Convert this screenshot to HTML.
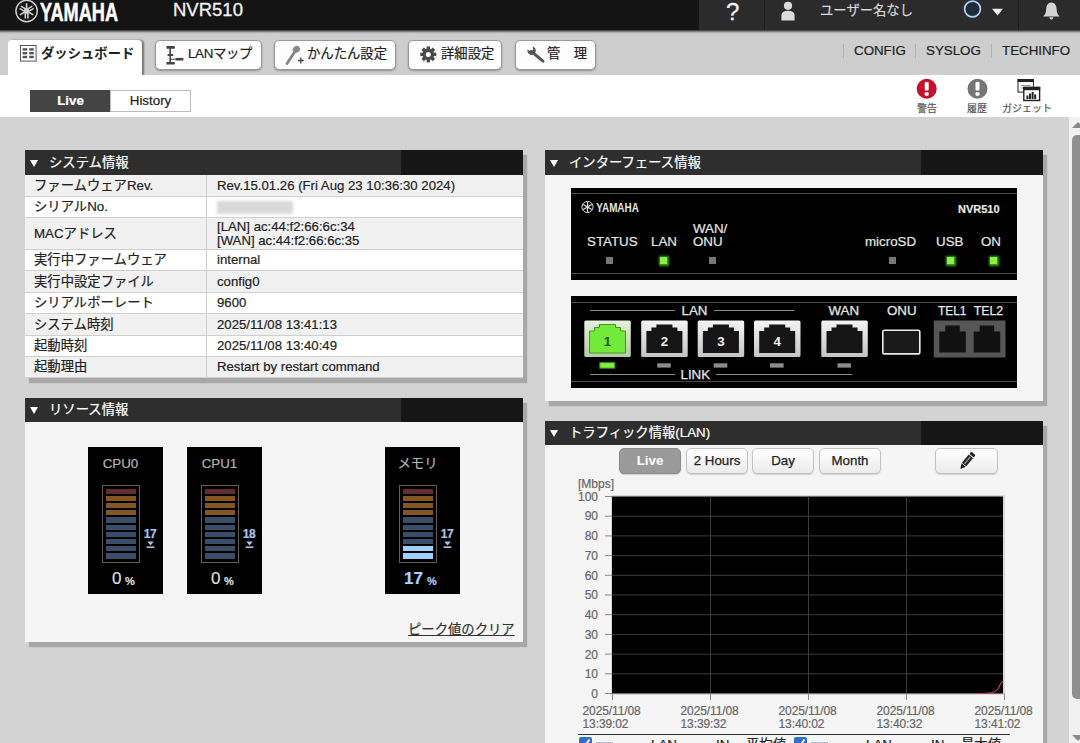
<!DOCTYPE html>
<html lang="ja">
<head>
<meta charset="utf-8">
<title>NVR510</title>
<style>
*{box-sizing:border-box;margin:0;padding:0}
html,body{width:1080px;height:743px;overflow:hidden;background:#d3d3d3;font-family:"Liberation Sans","Noto Sans CJK JP",sans-serif;color:#222;-webkit-text-stroke-width:.2px}
#root{position:absolute;left:0;top:0;width:1080px;height:743px;overflow:hidden}
.abs{position:absolute}
#hdr{position:absolute;left:0;top:0;width:1080px;height:30px;background:#141414}
#hdr .right{position:absolute;left:699px;top:0;width:381px;height:30px;background:#2b2b2b}
#hdr .div{position:absolute;top:0;width:1px;height:30px;background:#1c1c1c}
#nav{position:absolute;left:0;top:30px;width:1080px;height:45px;background:linear-gradient(#2e2e2e 0,#6e6e6e 1.2px,#b4b4b4 2.6px,#cecece 4px,#cecece 100%)}
.tab{position:absolute;left:8px;top:40px;width:134px;height:36px;background:#fff;border-radius:4px 4px 0 0;box-shadow:2px 0 2px rgba(0,0,0,.45)}
.nbtn{position:absolute;top:40px;height:30px;background:#fdfdfd;border:1px solid #989898;border-radius:5px;box-shadow:0 1px 2px rgba(0,0,0,.3)}
.ntext{position:absolute;white-space:nowrap;font-size:13.33px;color:#222;line-height:16px}
#sub{position:absolute;left:0;top:75px;width:1080px;height:42px;background:#fff}
#main{position:absolute;left:0;top:117px;width:1069px;height:626px;background:#d3d3d3}
#sbar{position:absolute;left:1069px;top:117px;width:11px;height:626px;background:#f1f1f1}
.ph{position:absolute;height:23px;background:#2e2e2e}
.ph .dk{position:absolute;right:0;top:0;bottom:0;width:122px;background:#161616}
.ph .t{position:absolute;left:24px;top:3px;font-size:13.33px;line-height:17px;color:#fff;white-space:nowrap}
.ph .a{position:absolute;left:5px;top:9px;width:0;height:0;border-left:4px solid transparent;border-right:4px solid transparent;border-top:7px solid #fff}
.pb{position:absolute;background:#f5f5f5;box-shadow:4px 5px 1px #a8a8a8}

.row{position:absolute;left:25px;width:498px;border-bottom:1px solid #cfcfcf;font-size:13.33px;color:#222}
.row .k{position:absolute;left:9px;white-space:nowrap}
.row .v{position:absolute;left:192px;white-space:nowrap;font-size:13.2px}
.row .c{position:absolute;left:181px;top:0;bottom:0;width:1px;background:#cfcfcf}
.g{background:#f1f1f1}.w{background:#fff}

.gz{position:absolute;top:447px;width:75px;height:147px;background:#000}
.gz .l{position:absolute;left:-5px;width:75px;top:9px;text-align:center;font-size:13.33px;line-height:16px;color:#b4b4b4}
.gz .f{position:absolute;left:14px;top:38px;width:38px;height:78px;border:1px solid #6a5c54}
.gz .b{position:absolute;left:3px;width:30px;height:5.2px}
.gz .p{position:absolute;left:53.5px;top:82px;width:17px;text-align:center;font-size:12px;line-height:11px;font-weight:bold;color:#a9c4ec;letter-spacing:-.5px}
.gz .n{position:absolute;top:122.3px;font-size:17px;line-height:20px;color:#ddd;white-space:nowrap}
.gz .pc{position:absolute;top:127.5px;font-size:11px;line-height:13px;font-weight:bold;color:#ddd}

.dl{position:absolute;font-size:13.33px;line-height:12.5px;color:#e6e6e6;white-space:nowrap;-webkit-text-stroke:.2px #e6e6e6;margin-top:.7px}
.led{position:absolute;width:7px;height:7px;background:#777;top:257px}
.led.on{background:#8af04e;box-shadow:0 0 2px 1.5px #3f9a1c;width:7px;height:7px}

.tb{position:absolute;top:448px;height:26px;border:1px solid #c2c2c2;border-radius:5px;background:linear-gradient(#fff,#ebebeb);box-shadow:0 1px 1px rgba(0,0,0,.15);font-size:13.33px;line-height:24px;text-align:center;color:#222;-webkit-text-stroke:.25px #222}
.tb.on{background:#9a9a9a;border-color:#8c8c8c;color:#fff;font-weight:bold;-webkit-text-stroke:0}
.yl{position:absolute;left:570px;width:28px;text-align:right;font-size:12px;line-height:14px;color:#666}
.xl{position:absolute;top:704.8px;width:70px;font-size:12px;line-height:13.3px;color:#666;white-space:nowrap;letter-spacing:-.1px}
</style>
</head>
<body>
<div id="root">
<div id="hdr">
  <svg class="abs" style="left:0;top:0" width="140" height="30" viewBox="0 0 140 30">
    <circle cx="26.6" cy="11" r="10.7" fill="none" stroke="#d0d0d0" stroke-width="1.4"/>
    <g transform="translate(26.6 11)" fill="#cfcfcf"><path d="M-0.8 -7.8 H0.8 V0 H2.1 V7.4 H0.5 V2.6 H-0.5 V7.4 H-2.1 V0 H-0.8 Z"/><g transform="rotate(120)"><path d="M-0.8 -7.8 H0.8 V0 H2.1 V7.4 H0.5 V2.6 H-0.5 V7.4 H-2.1 V0 H-0.8 Z"/></g><g transform="rotate(240)"><path d="M-0.8 -7.8 H0.8 V0 H2.1 V7.4 H0.5 V2.6 H-0.5 V7.4 H-2.1 V0 H-0.8 Z"/></g><circle r="2.6"/></g>
    <text x="40" y="20.8" font-family="Liberation Sans, sans-serif" font-weight="bold" font-size="25" fill="#fff" stroke="#fff" stroke-width=".5" textLength="78" lengthAdjust="spacingAndGlyphs">YAMAHA</text>
  </svg>
  <div class="abs" style="left:173px;top:0;font-size:18.5px;line-height:20px;color:#f2f2f2;white-space:nowrap;-webkit-text-stroke:.3px #f2f2f2">NVR510</div>
  <div class="right"></div>
  <div class="div" style="left:764px"></div>
  <div class="div" style="left:1018px"></div>
  <div class="abs" style="left:726px;top:-2px;font-size:24px;line-height:28px;color:#f0f0f0;-webkit-text-stroke:.3px #f0f0f0">?</div>
  <svg class="abs" style="left:778px;top:0" width="20" height="24" viewBox="0 0 20 24">
    <circle cx="10" cy="5.8" r="4.1" fill="#dcdcdc"/>
    <path d="M3.4 20.6 V15.5 Q3.4 10.8 10 10.8 Q16.6 10.8 16.6 15.5 V20.6 Z" fill="#dcdcdc"/>
  </svg>
  <div class="abs" style="left:820px;top:2px;font-size:13.33px;line-height:18px;color:#d8d8d8;white-space:nowrap">ユーザー名なし</div>
  <svg class="abs" style="left:958px;top:-4px" width="52" height="30" viewBox="0 0 52 30">
    <circle cx="14.5" cy="13" r="9.6" fill="#1d3a5a" opacity=".7"/>
    <circle cx="14.5" cy="13" r="7.9" fill="#202c3a" stroke="#b4d2ee" stroke-width="1.7"/>
    <path d="M34 12.8 H45 L39.5 19.6 Z" fill="#f0f0f0"/>
  </svg>
  <svg class="abs" style="left:1040px;top:0" width="24" height="24" viewBox="0 0 24 24">
    <path d="M11.4 2.5 C7.2 2.5 6.3 6.5 6.1 10 C5.9 13.5 4.6 14.8 3.2 16.4 H19.6 C18.2 14.8 16.9 13.5 16.7 10 C16.5 6.5 15.6 2.5 11.4 2.5 Z" fill="#d4d4d4"/>
    <path d="M9.3 17.3 H13.5 Q13.2 19.6 11.4 19.6 Q9.6 19.6 9.3 17.3 Z" fill="#d4d4d4"/>
  </svg>
</div>
<div id="nav"></div>
<div class="tab"></div>
<svg class="abs" style="left:20px;top:45px" width="17" height="17" viewBox="0 0 17 17">
  <rect x="0.5" y="0.5" width="15.6" height="15.6" fill="#fff" stroke="#555" stroke-width="1"/>
  <g fill="#555"><rect x="2.6" y="3.2" width="4.6" height="2.4"/><rect x="2.6" y="7" width="4.6" height="2.4"/><rect x="2.6" y="10.8" width="4.6" height="2.4"/>
  <rect x="9.2" y="3.2" width="4.6" height="2.4"/><rect x="9.2" y="7" width="4.6" height="2.4"/><rect x="9.2" y="10.8" width="4.6" height="2.4"/></g>
</svg>
<div class="ntext" style="left:41px;top:46px;font-weight:bold;color:#222;-webkit-text-stroke-width:0">ダッシュボード</div>

<div class="nbtn" style="left:155px;width:107px"></div>
<svg class="abs" style="left:165px;top:45px" width="20" height="20" viewBox="0 0 20 20">
  <g stroke="#444" fill="none"><path d="M5.2 1.6 V18.6" stroke-width="1.6"/><path d="M1.4 2.4 H9.8 M1.4 18.2 H9.8" stroke-width="2.6"/><path d="M2.6 10 H8.2" stroke-width="2"/><path d="M10.5 14.2 H18.4" stroke-width="2.6"/><path d="M5.2 14.2 H10.5" stroke-width="1"/></g>
</svg>
<div class="ntext" style="left:188px;top:46px;letter-spacing:-.3px">LANマップ</div>

<div class="nbtn" style="left:274px;width:122px"></div>
<svg class="abs" style="left:284px;top:43px" width="22" height="24" viewBox="0 0 22 24">
  <path d="M3 20.6 L11.8 7.2" stroke="#868686" stroke-width="2.8" stroke-linecap="round"/>
  <ellipse cx="12.4" cy="6.4" rx="3.8" ry="3.3" fill="#8a8a8a" transform="rotate(-35 12.4 6.4)"/>
  <path d="M16.8 14.6 V20.4 M13.9 17.5 H19.7" stroke="#444" stroke-width="1.3"/>
</svg>
<div class="ntext" style="left:307px;top:46px">かんたん設定</div>

<div class="nbtn" style="left:408px;width:94px"></div>
<svg class="abs" style="left:419px;top:45px" width="19" height="19" viewBox="0 0 19 19">
  <g transform="translate(9.3 9.4)" fill="#4a4a4a">
    <g id="gt"><rect x="-1.7" y="-8" width="3.4" height="16"/></g>
    <rect x="-1.7" y="-8" width="3.4" height="16" transform="rotate(45)"/>
    <rect x="-1.7" y="-8" width="3.4" height="16" transform="rotate(90)"/>
    <rect x="-1.7" y="-8" width="3.4" height="16" transform="rotate(135)"/>
    <circle r="5.8"/><circle r="2.5" fill="#fff"/>
  </g>
</svg>
<div class="ntext" style="left:441px;top:46px">詳細設定</div>

<div class="nbtn" style="left:515px;width:81px"></div>
<svg class="abs" style="left:525px;top:45px" width="22" height="20" viewBox="0 0 22 20">
  <path d="M6.2 6.4 L18 16.2" stroke="#555" stroke-width="3" stroke-linecap="round"/>
  <path d="M2.6 4.4 A4.2 4.2 0 1 0 7.6 1.6 L8.2 5 L5.6 6.6 Z" fill="#555"/>
</svg>
<div class="ntext" style="left:547px;top:46px">管　理</div>

<div class="abs" style="left:843px;top:44px;width:1px;height:14px;background:#b2b2b2"></div>
<div class="abs" style="left:915px;top:44px;width:1px;height:14px;background:#b2b2b2"></div>
<div class="abs" style="left:991px;top:44px;width:1px;height:14px;background:#b2b2b2"></div>
<div class="ntext" style="left:854px;top:43px;color:#222">CONFIG</div>
<div class="ntext" style="left:926px;top:43px;color:#222">SYSLOG</div>
<div class="ntext" style="left:1002px;top:43px;color:#222">TECHINFO</div>
<div id="sub"></div>
<div class="abs" style="left:30px;top:90px;width:81px;height:22px;background:#444;color:#fff;font-weight:bold;font-size:13.33px;line-height:22px;text-align:center">Live</div>
<div class="abs" style="left:110px;top:90px;width:81px;height:22px;background:#fff;border:1px solid #bbb;color:#222;font-size:13.33px;line-height:20px;text-align:center">History</div>
<svg class="abs" style="left:910px;top:76px" width="150" height="28" viewBox="0 0 150 28">
  <circle cx="16.7" cy="12.7" r="10" fill="#c8102e"/>
  <rect x="14.7" y="6" width="4" height="8.6" rx="1" fill="#fff"/><rect x="14.7" y="16.2" width="4" height="3.6" rx="1" fill="#fff"/>
  <circle cx="67.5" cy="12.7" r="10" fill="#767676"/>
  <rect x="65.5" y="6" width="4" height="8.6" rx="1" fill="#fff"/><rect x="65.5" y="16.2" width="4" height="3.6" rx="1" fill="#fff"/>
  <rect x="108" y="3.5" width="15.4" height="12.6" fill="#fff" stroke="#222" stroke-width="1"/><rect x="107.5" y="3" width="16.4" height="3" fill="#222"/>
  <path d="M110.5 9.5 H121 M110.5 12 H114" stroke="#999" stroke-width="1"/>
  <rect x="113.8" y="11.5" width="15.8" height="13" fill="#fff" stroke="#222" stroke-width="1.4"/><rect x="113.2" y="10.8" width="17" height="3.4" fill="#222"/>
  <g fill="#222"><rect x="116.4" y="19.5" width="2" height="3.6"/><rect x="119" y="17.6" width="2" height="5.5"/><rect x="121.6" y="16" width="2" height="7.1"/><rect x="124.2" y="18.4" width="2" height="4.7"/></g>
</svg>
<div class="abs" style="left:907px;top:102px;width:40px;text-align:center;font-size:10px;line-height:13px;color:#555">警告</div>
<div class="abs" style="left:957px;top:102px;width:40px;text-align:center;font-size:10px;line-height:13px;color:#555">履歴</div>
<div class="abs" style="left:997px;top:102px;width:60px;text-align:center;font-size:10px;line-height:13px;color:#555;white-space:nowrap">ガジェット</div>
<div id="main"></div>
<div id="sbar"></div>
<div class="abs" style="left:1072px;top:135px;width:12px;height:564px;background:#8f8f8f;border-radius:5px"></div>
<div class="abs" style="left:1072px;top:122px;width:0;height:0;border-left:6px solid transparent;border-right:6px solid transparent;border-bottom:6px solid #8a8a8a"></div>
<div class="abs" style="left:1072px;top:735px;width:0;height:0;border-left:6px solid transparent;border-right:6px solid transparent;border-top:6px solid #8a8a8a"></div>
<div class="pb" style="left:25px;top:150px;width:498px;height:228px"></div>
<div class="ph" style="left:25px;top:150px;width:498px;height:25px"><div class="dk"></div><div class="a" style="top:10px"></div><div class="t" style="top:4px">システム情報</div></div>
<div class="row g" style="top:175px;height:22px"><div class="k" style="top:0;line-height:21px">ファームウェアRev.</div><div class="c"></div><div class="v" style="top:0;line-height:21px">Rev.15.01.26 (Fri Aug 23 10:36:30 2024)</div></div>
<div class="row w" style="top:197px;height:21px"><div class="k" style="top:0;line-height:20px">シリアルNo.</div><div class="c"></div><div class="abs" style="left:192px;top:4px;width:76px;height:13px;background:#d9d9d9;filter:blur(1.5px)"></div></div>
<div class="row g" style="top:218px;height:32px"><div class="k" style="top:0;line-height:31px">MACアドレス</div><div class="c"></div><div class="v" style="top:2px;line-height:14px">[LAN] ac:44:f2:66:6c:34<br>[WAN] ac:44:f2:66:6c:35</div></div>
<div class="row w" style="top:250px;height:21px"><div class="k" style="top:0;line-height:20px">実行中ファームウェア</div><div class="c"></div><div class="v" style="top:0;line-height:20px">internal</div></div>
<div class="row g" style="top:271px;height:22px"><div class="k" style="top:0;line-height:21px">実行中設定ファイル</div><div class="c"></div><div class="v" style="top:0;line-height:21px">config0</div></div>
<div class="row w" style="top:293px;height:21px"><div class="k" style="top:0;line-height:20px">シリアルボーレート</div><div class="c"></div><div class="v" style="top:0;line-height:20px">9600</div></div>
<div class="row g" style="top:314px;height:22px"><div class="k" style="top:0;line-height:21px">システム時刻</div><div class="c"></div><div class="v" style="top:0;line-height:21px">2025/11/08 13:41:13</div></div>
<div class="row w" style="top:336px;height:21px"><div class="k" style="top:0;line-height:20px">起動時刻</div><div class="c"></div><div class="v" style="top:0;line-height:20px">2025/11/08 13:40:49</div></div>
<div class="row g" style="top:357px;height:21px"><div class="k" style="top:0;line-height:20px">起動理由</div><div class="c"></div><div class="v" style="top:0;line-height:20px">Restart by restart command</div></div>
<div class="pb" style="left:25px;top:398px;width:498px;height:244px"></div>
<div class="ph" style="left:25px;top:398px;width:498px;height:24px"><div class="dk"></div><div class="a"></div><div class="t">リソース情報</div></div>
<div class="gz" style="left:88px"><div class="l">CPU0</div><div class="f"><div class="b" style="top:2.6px;background:#632d2c"></div><div class="b" style="top:9.8px;background:#835624"></div><div class="b" style="top:17.0px;background:#835624"></div><div class="b" style="top:24.2px;background:#835624"></div><div class="b" style="top:31.4px;background:#394e68"></div><div class="b" style="top:38.6px;background:#394e68"></div><div class="b" style="top:45.8px;background:#394e68"></div><div class="b" style="top:53.0px;background:#394e68"></div><div class="b" style="top:60.2px;background:#394e68"></div><div class="b" style="top:67.4px;background:#394e68"></div></div><div class="p">17</div><svg class="abs" style="left:58px;top:94px" width="9" height="8" viewBox="0 0 9 8"><path d="M1.2 0.6 H7.8 L4.5 4.6 Z" fill="#a9c4ec"/><rect x="0.6" y="5.4" width="7.8" height="1.6" fill="#a9c4ec"/></svg><div class="n" style="left:24px;color:#dedede">0</div><div class="pc" style="left:37px;color:#dedede">%</div></div>
<div class="gz" style="left:187px"><div class="l">CPU1</div><div class="f"><div class="b" style="top:2.6px;background:#632d2c"></div><div class="b" style="top:9.8px;background:#835624"></div><div class="b" style="top:17.0px;background:#835624"></div><div class="b" style="top:24.2px;background:#835624"></div><div class="b" style="top:31.4px;background:#394e68"></div><div class="b" style="top:38.6px;background:#394e68"></div><div class="b" style="top:45.8px;background:#394e68"></div><div class="b" style="top:53.0px;background:#394e68"></div><div class="b" style="top:60.2px;background:#394e68"></div><div class="b" style="top:67.4px;background:#394e68"></div></div><div class="p">18</div><svg class="abs" style="left:58px;top:94px" width="9" height="8" viewBox="0 0 9 8"><path d="M1.2 0.6 H7.8 L4.5 4.6 Z" fill="#a9c4ec"/><rect x="0.6" y="5.4" width="7.8" height="1.6" fill="#a9c4ec"/></svg><div class="n" style="left:24px;color:#dedede">0</div><div class="pc" style="left:37px;color:#dedede">%</div></div>
<div class="gz" style="left:385px"><div class="l">メモリ</div><div class="f"><div class="b" style="top:2.6px;background:#632d2c"></div><div class="b" style="top:9.8px;background:#835624"></div><div class="b" style="top:17.0px;background:#835624"></div><div class="b" style="top:24.2px;background:#835624"></div><div class="b" style="top:31.4px;background:#394e68"></div><div class="b" style="top:38.6px;background:#394e68"></div><div class="b" style="top:45.8px;background:#394e68"></div><div class="b" style="top:53.0px;background:#394e68"></div><div class="b" style="top:60.2px;background:#9ed0fc"></div><div class="b" style="top:67.4px;background:#9ed0fc"></div></div><div class="p">17</div><svg class="abs" style="left:58px;top:94px" width="9" height="8" viewBox="0 0 9 8"><path d="M1.2 0.6 H7.8 L4.5 4.6 Z" fill="#a9c4ec"/><rect x="0.6" y="5.4" width="7.8" height="1.6" fill="#a9c4ec"/></svg><div class="n" style="left:19px;color:#a9d2ff;font-weight:bold">17</div><div class="pc" style="left:42px;color:#a9d2ff">%</div></div>
<div class="abs" style="left:408px;top:621px;font-size:13.33px;line-height:18px;color:#333;text-decoration:underline;white-space:nowrap">ピーク値のクリア</div>
<div class="pb" style="left:545px;top:150px;width:498px;height:251px"></div>
<div class="ph" style="left:545px;top:150px;width:498px;height:25px"><div class="dk"></div><div class="a" style="top:10px"></div><div class="t" style="top:4px">インターフェース情報</div></div>
<div class="abs" style="left:571px;top:188px;width:446px;height:92px;background:#000"></div>
<div class="abs" style="left:571px;top:193px;width:446px;height:1px;background:#4a4a4a"></div>
<div class="abs" style="left:571px;top:273px;width:446px;height:1px;background:#4a4a4a"></div>
<svg class="abs" style="left:578px;top:198px" width="70" height="18" viewBox="0 0 70 18">
 <circle cx="9.5" cy="9" r="5.6" fill="none" stroke="#ddd" stroke-width="1"/>
 <g stroke="#ddd" stroke-width="1.3"><line x1="9.5" y1="4" x2="9.5" y2="14"/><line x1="5.2" y1="6.5" x2="13.8" y2="11.5"/><line x1="13.8" y1="6.5" x2="5.2" y2="11.5"/></g>
 <text x="18.3" y="14.2" font-family="Liberation Sans, sans-serif" font-weight="bold" font-size="13.5" fill="#e6e6e6" textLength="42.5" lengthAdjust="spacingAndGlyphs">YAMAHA</text>
</svg>
<div class="dl" style="left:958px;top:202px;font-size:11px;font-weight:bold;line-height:12px">NVR510</div>
<div class="dl" style="left:587px;top:235px">STATUS</div><div class="dl" style="left:651px;top:235px">LAN</div><div class="dl" style="left:693px;top:222.5px">WAN/<br>ONU</div>
<div class="dl" style="left:865px;top:235px">microSD</div><div class="dl" style="left:936px;top:235px">USB</div><div class="dl" style="left:981px;top:235px">ON</div>
<div class="led" style="left:605.5px"></div><div class="led on" style="left:660px"></div><div class="led" style="left:709px"></div><div class="led" style="left:888.5px"></div><div class="led on" style="left:947px"></div><div class="led on" style="left:989.5px"></div>
<svg class="abs" style="left:571px;top:296px" width="446" height="92" viewBox="571 296 446 92">
<defs><linearGradient id="bz" x1="0" y1="0" x2="0" y2="1"><stop offset="0" stop-color="#f4f4f4"/><stop offset="1" stop-color="#c4c4c4"/></linearGradient><linearGradient id="bg" x1="0" y1="0" x2="0" y2="1"><stop offset="0" stop-color="#e6f2dc"/><stop offset="1" stop-color="#b8c8ac"/></linearGradient></defs>
<rect x="571" y="296" width="446" height="92" fill="#000"/>
<rect x="571" y="302" width="446" height="1" fill="#4a4a4a"/><rect x="571" y="381" width="446" height="1" fill="#4a4a4a"/>
<g stroke="#8a8a8a" stroke-width="1"><path d="M590 310.5 H675 M714 310.5 H794.5 M590 374.5 H675 M716 374.5 H852.5"/></g>
<g font-family="Liberation Sans, sans-serif" font-size="13.33" fill="#e8e8e8" stroke="#e8e8e8" stroke-width=".25"><text x="681.5" y="315.3">LAN</text><text x="680.5" y="379.3">LINK</text><text x="828.5" y="315.3">WAN</text><text x="887" y="315.3">ONU</text><text x="938" y="315.3" textLength="28.5" lengthAdjust="spacingAndGlyphs">TEL1</text><text x="973.7" y="315.3" textLength="29.5" lengthAdjust="spacingAndGlyphs">TEL2</text></g>
<rect x="584.3" y="320.5" width="46.5" height="36.5" rx="1.5" fill="url(#bg)"/><path d="M589.5 353.0 H625.5 V331.0 H620.5 V327.5 H615.5 V324.5 H599.5 V327.5 H594.5 V331.0 H589.5 Z" fill="#72ea3a" stroke="#3f9a20" stroke-width="1"/><text x="607.5" y="346" text-anchor="middle" font-family="Liberation Sans, sans-serif" font-size="13.33" font-weight="bold" fill="#1c5a10">1</text>
<rect x="599.8" y="362.6" width="15" height="5.6" fill="#7cf040" stroke="#3c8a1c" stroke-width="1"/>
<rect x="641.2" y="320.5" width="46.5" height="36.5" rx="1.5" fill="url(#bz)"/><path d="M646.4 353.0 H682.4 V331.0 H677.4 V327.5 H672.4 V324.5 H656.4 V327.5 H651.4 V331.0 H646.4 Z" fill="#151515"/><text x="664.4" y="346" text-anchor="middle" font-family="Liberation Sans, sans-serif" font-size="13.33" font-weight="bold" fill="#f0f0f0">2</text>
<rect x="657.2" y="363.3" width="13.6" height="4.3" fill="#8c8c8c"/>
<rect x="697.7" y="320.5" width="46.5" height="36.5" rx="1.5" fill="url(#bz)"/><path d="M702.9 353.0 H738.9 V331.0 H733.9 V327.5 H728.9 V324.5 H712.9 V327.5 H707.9 V331.0 H702.9 Z" fill="#151515"/><text x="720.9" y="346" text-anchor="middle" font-family="Liberation Sans, sans-serif" font-size="13.33" font-weight="bold" fill="#f0f0f0">3</text>
<rect x="713.7" y="363.3" width="13.6" height="4.3" fill="#8c8c8c"/>
<rect x="754.0" y="320.5" width="46.5" height="36.5" rx="1.5" fill="url(#bz)"/><path d="M759.2 353.0 H795.2 V331.0 H790.2 V327.5 H785.2 V324.5 H769.2 V327.5 H764.2 V331.0 H759.2 Z" fill="#151515"/><text x="777.2" y="346" text-anchor="middle" font-family="Liberation Sans, sans-serif" font-size="13.33" font-weight="bold" fill="#f0f0f0">4</text>
<rect x="770.0" y="363.3" width="13.6" height="4.3" fill="#8c8c8c"/>
<rect x="821.3" y="320.5" width="46.5" height="36.5" rx="1.5" fill="url(#bz)"/><path d="M826.5 353.0 H862.5 V331.0 H857.5 V327.5 H852.5 V324.5 H836.5 V327.5 H831.5 V331.0 H826.5 Z" fill="#151515"/><rect x="837.5" y="363.3" width="13.4" height="4.3" fill="#8c8c8c"/>
<rect x="882.8" y="330.3" width="37" height="23.6" rx="1.5" fill="#1a1a1a" stroke="#ececec" stroke-width="1.6"/>
<rect x="933.8" y="320.5" width="71.7" height="37" fill="#565656"/><path d="M939.3 352.5 H965.8 V331.5 H959.8 V325.5 H945.3 V331.5 H939.3 Z" fill="#111"/><path d="M973.7 352.5 H1000.2 V331.5 H994.2 V325.5 H979.7 V331.5 H973.7 Z" fill="#111"/>
</svg>
<div class="pb" style="left:545px;top:421px;width:498px;height:330px"></div>
<div class="ph" style="left:545px;top:421px;width:498px;height:24px"><div class="dk"></div><div class="a"></div><div class="t">トラフィック情報(LAN)</div></div>
<div class="tb on" style="left:619px;width:62px">Live</div><div class="tb" style="left:686px;width:62px">2 Hours</div><div class="tb" style="left:752px;width:62px">Day</div><div class="tb" style="left:819px;width:62px">Month</div><div class="tb" style="left:935px;width:63px"></div>
<svg class="abs" style="left:955px;top:450px" width="24" height="22" viewBox="0 0 24 22"><g transform="rotate(40 12 11)"><rect x="9.2" y="1" width="5.6" height="3" rx="1" fill="#222"/><rect x="9.2" y="5" width="5.6" height="10.5" fill="#222"/><path d="M9.2 16.2 H14.8 L12 21.4 Z" fill="#222"/><rect x="11.2" y="5.8" width="1.4" height="9" fill="#999"/></g></svg>
<div class="abs" style="left:578px;top:477px;font-size:12px;line-height:14px;color:#666">[Mbps]</div>
<div class="yl" style="top:489.5px">100</div><div class="yl" style="top:509.2px">90</div><div class="yl" style="top:529.0px">80</div><div class="yl" style="top:548.8px">70</div><div class="yl" style="top:568.5px">60</div><div class="yl" style="top:588.2px">50</div><div class="yl" style="top:608.0px">40</div><div class="yl" style="top:627.8px">30</div><div class="yl" style="top:647.5px">20</div><div class="yl" style="top:667.2px">10</div><div class="yl" style="top:687.0px">0</div>
<svg class="abs" style="left:600px;top:490px" width="420" height="214" viewBox="600 490 420 214"><rect x="611" y="495" width="394" height="200" fill="#d8d8d8"/><rect x="612" y="496.5" width="391" height="197" fill="#000"/><g stroke="#3c3c3c" stroke-width="1"><path d="M612 516.2 H1003"/><path d="M612 535.9 H1003"/><path d="M612 555.6 H1003"/><path d="M612 575.3 H1003"/><path d="M612 595.0 H1003"/><path d="M612 614.7 H1003"/><path d="M612 634.4 H1003"/><path d="M612 654.1 H1003"/><path d="M612 673.8 H1003"/><path d="M710.5 496.5 V693.5"/><path d="M808.5 496.5 V693.5"/><path d="M906.5 496.5 V693.5"/></g><g stroke="#8a8a8a" stroke-width="1"><path d="M605 496.5 H612"/><path d="M605 516.2 H612"/><path d="M605 535.9 H612"/><path d="M605 555.6 H612"/><path d="M605 575.3 H612"/><path d="M605 595.0 H612"/><path d="M605 614.7 H612"/><path d="M605 634.4 H612"/><path d="M605 654.1 H612"/><path d="M605 673.8 H612"/><path d="M605 693.5 H612"/><path d="M612.5 693.5 V700"/><path d="M710.5 693.5 V700"/><path d="M808.5 693.5 V700"/><path d="M906.5 693.5 V700"/><path d="M1004.5 693.5 V700"/></g><path d="M978 693.5 C990 693.5 995 693 998 689 C1000 685 1001 682 1003 681" fill="none" stroke="#c23a5c" stroke-width="1.2"/></svg>
<div class="xl" style="left:582.5px">2025/11/08<br>13:39:02</div><div class="xl" style="left:680.5px">2025/11/08<br>13:39:32</div><div class="xl" style="left:778.5px">2025/11/08<br>13:40:02</div><div class="xl" style="left:876.5px">2025/11/08<br>13:40:32</div><div class="xl" style="left:974.5px">2025/11/08<br>13:41:02</div>
<div class="abs" style="left:578px;top:734px;width:432px;height:1px;background:#333"></div>
<div class="abs" style="left:579px;top:737px;width:13px;height:13px;background:#2f6fd0;border-radius:2px"></div><svg class="abs" style="left:579px;top:737px" width="13" height="13" viewBox="0 0 13 13"><path d="M2.8 6.8 L5.4 9.6 L10.4 2.6" fill="none" stroke="#fff" stroke-width="1.8"/></svg><div class="abs" style="left:596px;top:742px;width:17px;height:1px;background:#b4c2d2"></div><div class="abs" style="left:651px;top:737px;font-size:13.33px;line-height:16px;color:#222;white-space:nowrap">LAN</div><div class="abs" style="left:716px;top:737px;font-size:13.33px;line-height:16px;color:#222;white-space:nowrap">IN</div><div class="abs" style="left:746px;top:737px;font-size:13.33px;line-height:16px;color:#222;white-space:nowrap">平均値</div>
<div class="abs" style="left:794px;top:737px;width:13px;height:13px;background:#2f6fd0;border-radius:2px"></div><svg class="abs" style="left:794px;top:737px" width="13" height="13" viewBox="0 0 13 13"><path d="M2.8 6.8 L5.4 9.6 L10.4 2.6" fill="none" stroke="#fff" stroke-width="1.8"/></svg><div class="abs" style="left:811px;top:742px;width:17px;height:1px;background:#b4c2d2"></div><div class="abs" style="left:866px;top:737px;font-size:13.33px;line-height:16px;color:#222;white-space:nowrap">LAN</div><div class="abs" style="left:931px;top:737px;font-size:13.33px;line-height:16px;color:#222;white-space:nowrap">IN</div><div class="abs" style="left:961px;top:737px;font-size:13.33px;line-height:16px;color:#222;white-space:nowrap">最大値</div>
</div>
</body>
</html>
